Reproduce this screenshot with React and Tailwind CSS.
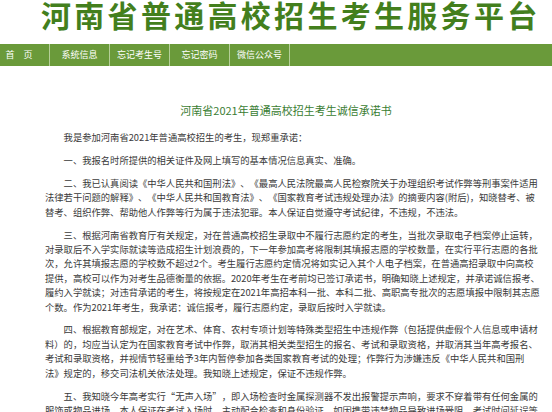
export default function App() {
  const nav = ["首\u3000页", "系统信息", "忘记考生号", "忘记密码", "微信公众号"];
  const paras = [
    ["我是参加河南省2021年普通高校招生的考生，现郑重承诺："],
    ["一、我报名时所提供的相关证件及网上填写的基本情况信息真实、准确。"],
    [
      "二、我已认真阅读《中华人民共和国刑法》、《最高人民法院最高人民检察院关于办理组织考试作弊等刑事案件适用",
      "法律若干问题的解释》、《中华人民共和国教育法》、《国家教育考试违规处理办法》的摘要内容(附后)，知晓替考、被",
      "替考、组织作弊、帮助他人作弊等行为属于违法犯罪。本人保证自觉遵守考试纪律，不违规，不违法。",
    ],
    [
      "三、根据河南省教育厅有关规定，对在普通高校招生录取中不履行志愿约定的考生，当批次录取电子档案停止运转，",
      "对录取后不入学实际就读等造成招生计划浪费的，下一年参加高考将限制其填报志愿的学校数量，在实行平行志愿的各批",
      "次，允许其填报志愿的学校数不超过2个。考生履行志愿约定情况将如实记入其个人电子档案，在普通高招录取中向高校",
      "提供，高校可以作为对考生品德衡量的依据。2020年考生在考前均已签订承诺书，明确知晓上述规定，并承诺诚信报考、",
      "履约入学就读；对违背承诺的考生，将按规定在2021年高招本科一批、本科二批、高职高专批次的志愿填报中限制其志愿",
      "个数。作为2021年考生，我承诺：诚信报考，履行志愿约定，录取后按时入学就读。",
    ],
    [
      "四、根据教育部规定，对在艺术、体育、农村专项计划等特殊类型招生中违规作弊（包括提供虚假个人信息或申请材",
      "料）的，均应当认定为在国家教育考试中作弊，取消其相关类型招生的报名、考试和录取资格，并取消其当年高考报名、",
      "考试和录取资格，并视情节轻重给予3年内暂停参加各类国家教育考试的处理；作弊行为涉嫌违反《中华人民共和国刑",
      "法》规定的，移交司法机关依法处理。我知晓上述规定，保证不违规作弊。",
    ],
    [
      "五、我知晓今年高考实行“无声入场”，即入场检查时金属探测器不发出报警提示声响，要求不穿着带有任何金属的",
      "服饰或物品进场。本人保证在考试入场时，主动配合检查和身份验证，如因携带违禁物品导致进场受阻，考试时间延误等",
    ],
  ];
  return (
    <div className="w-[552px] h-[412px] overflow-hidden bg-white font-['Noto_Sans_CJK_SC',sans-serif] [text-spacing-trim:space-all]">
      <div className="h-[44px] pl-[41px] overflow-hidden">
        <div className="-mt-[1px] text-[30px] leading-[30px] font-bold tracking-[3.3px] text-[#437f1d] whitespace-nowrap">
          河南省普通高校招生考生服务平台
        </div>
      </div>
      <div className="flex h-[22px] bg-[#6a9a3a] text-white text-[9px]">
        {nav.map((t, i) => (
          <div
            key={i}
            className={
              i === 0
                ? "w-[60px] -ml-[11px] shrink-0 flex items-center justify-center"
                : "w-[60px] shrink-0 flex items-center justify-center border-l border-[#b5cf98]"
            }
          >
            {t}
          </div>
        ))}
        <div className="flex-1 border-l border-[#b5cf98]" />
      </div>
      <div className="mt-[37px] pl-[20px] text-center text-[11px] leading-[14px] text-[#3a7d32]">
        河南省2021年普通高校招生考生诚信承诺书
      </div>
      <div className="mt-[13px] pl-[45px] text-[9.3px] leading-[14.4px] text-[#3a3a3a]">
        {paras.map((p, i) => (
          <div key={i} className="mb-[8.5px]">
            {p.map((line, j) => (
              <div key={j} className={j === 0 ? "whitespace-nowrap indent-[2em]" : "whitespace-nowrap"}>
                {line}
              </div>
            ))}
          </div>
        ))}
      </div>
    </div>
  );
}
